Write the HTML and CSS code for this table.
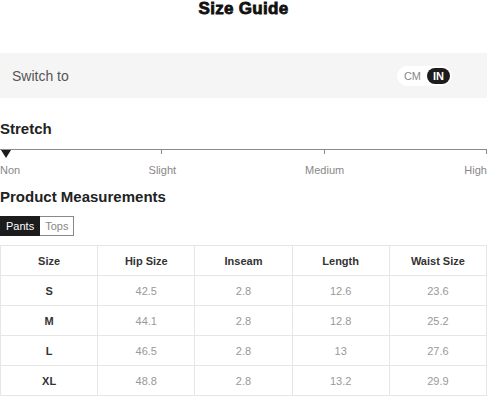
FILE: index.html
```html
<!DOCTYPE html>
<html lang="en">
<head>
  <meta charset="UTF-8">
  <title>Size Guide</title>
  <link rel="stylesheet" href="styles.css">
</head>
<body>
  <h1 class="title">Size Guide</h1>

  <!-- unit switch -->
  <section class="switch-bar">
    <span>Switch to</span>
    <div class="unit-toggle">
      <span class="unit">CM</span>
      <span class="unit active">IN</span>
    </div>
  </section>

  <!-- stretch scale -->
  <section class="stretch">
    <h2>Stretch</h2>
    <div class="scale">
      <span class="seg"></span>
      <span class="seg"></span>
      <span class="seg"></span>
      <span class="marker"></span>
    </div>
    <div class="scale-labels">
      <span class="lbl-start">Non</span>
      <span class="lbl-mid">Slight</span>
      <span class="lbl-mid">Medium</span>
      <span class="lbl-end">High</span>
    </div>
  </section>

  <!-- measurements -->
  <section class="measure">
    <h2>Product Measurements</h2>
    <div class="tabs">
      <span class="tab active">Pants</span>
      <span class="tab">Tops</span>
    </div>
    <table class="size-table">
      <thead>
        <tr><th>Size</th><th>Hip Size</th><th>Inseam</th><th>Length</th><th>Waist Size</th></tr>
      </thead>
      <tbody>
        <tr><th>S</th><td>42.5</td><td>2.8</td><td>12.6</td><td>23.6</td></tr>
        <tr><th>M</th><td>44.1</td><td>2.8</td><td>12.8</td><td>25.2</td></tr>
        <tr><th>L</th><td>46.5</td><td>2.8</td><td>13</td><td>27.6</td></tr>
        <tr><th>XL</th><td>48.8</td><td>2.8</td><td>13.2</td><td>29.9</td></tr>
      </tbody>
    </table>
  </section>
</body>
</html>
```

FILE: styles.css
```css
body {
  margin: 0;
  width: 487px;
  font-family: "Liberation Sans", Arial, sans-serif;
  color: #222;
  background: #fff;
}

.title {
  margin: 0;
  font-size: 17px;
  line-height: 17px;
  font-weight: 900;
  text-align: center;
  color: #111;
  -webkit-text-stroke: 0.8px #111;
  letter-spacing: 0.3px;
}

.switch-bar {
  margin-top: 36px;
  height: 45px;
  background: #f5f5f5;
  display: flex;
  align-items: center;
  justify-content: space-between;
  padding: 0 35px 0 12px;
  font-size: 14px;
  color: #555;
}

.unit-toggle {
  display: flex;
  align-items: center;
  background: #fff;
  border-radius: 10px;
  padding: 2px;
  height: 16px;
}

.unit {
  font-size: 11px;
  color: #888;
  padding: 0 6px 0 5px;
  line-height: 16px;
}

.unit.active {
  background: #1c1c1c;
  color: #fff;
  font-weight: bold;
  border-radius: 8px;
  padding: 0 6px;
}

h2 {
  margin: 0;
  font-size: 15px;
  line-height: 18px;
  font-weight: bold;
  color: #222;
}

.stretch {
  margin-top: 22px;
}

.scale {
  position: relative;
  display: flex;
  margin-top: 11px;
  border-top: 1px solid #8a8a8a;
}

.seg {
  flex: 1;
  height: 4px;
  border-right: 1px solid #8a8a8a;
}

.marker {
  position: absolute;
  left: 1px;
  top: 0;
  width: 0;
  height: 0;
  border-left: 5px solid transparent;
  border-right: 5px solid transparent;
  border-top: 8px solid #1c1c1c;
}

.scale-labels {
  display: grid;
  grid-template-columns: repeat(6, 1fr);
  margin-top: 10px;
  font-size: 11px;
  line-height: 13px;
  color: #888;
}

.lbl-start { text-align: left; }
.lbl-mid { grid-column: span 2; text-align: center; }
.lbl-end { text-align: right; }

.measure {
  margin-top: 11px;
}

.tabs {
  display: flex;
  margin-top: 10px;
}

.tab {
  font-size: 11px;
  line-height: 18px;
  padding: 0 5px;
  color: #888;
  border: 1px solid #888;
  border-left: none;
}

.tab.active {
  background: #1c1c1c;
  color: #fff;
  border-color: #1c1c1c;
  border-left: 1px solid #1c1c1c;
}

.size-table {
  margin-top: 9px;
  width: 487px;
  border-collapse: collapse;
  table-layout: fixed;
  font-size: 11px;
}

.size-table th,
.size-table td {
  height: 29px;
  padding: 0;
  text-align: center;
  border: 1px solid #e6e6e6;
}

.size-table th {
  font-weight: bold;
  color: #333;
}

.size-table td {
  color: #999;
}
```
